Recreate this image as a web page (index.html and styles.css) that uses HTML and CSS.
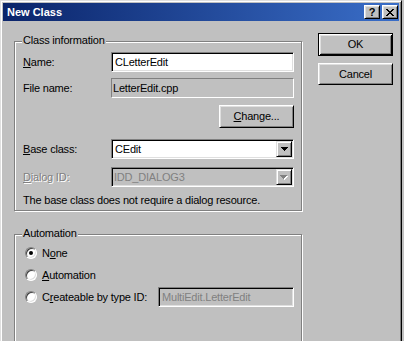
FILE: index.html
```html
<!DOCTYPE html>
<html>
<head>
<meta charset="utf-8">
<title>New Class</title>
<link rel="stylesheet" href="styles.css">
</head>
<body>
<div class="window">
  <div class="titlebar">
    <span class="title">New Class</span>
    <div class="tbtns">
      <span class="tbtn help">?</span>
      <span class="tbtn close">
        <svg width="8" height="7" viewBox="0 0 8 7" shape-rendering="crispEdges"><path d="M0 0h2v1h1v1h2v-1h1v-1h2v1h-1v1h-1v1h-1v1h1v1h1v1h1v1h-2v-1h-1v-1h-2v1h-1v1h-2v-1h1v-1h1v-1h1v-1h-1v-1h-1v-1h-1z" fill="#000"/></svg>
      </span>
    </div>
  </div>
  <div class="client">
    <div class="left">
      <div class="group g1">
        <span class="legend">Class information</span>
        <div class="row r-name">
          <span class="lbl"><u>N</u>ame:</span>
          <div class="edit">CLetterEdit</div>
        </div>
        <div class="row r-file">
          <span class="lbl">File name:</span>
          <div class="static">LetterEdit.cpp</div>
        </div>
        <div class="row r-change">
          <span class="btn change"><span><u>C</u>hange...</span></span>
        </div>
        <div class="row r-base">
          <span class="lbl"><u>B</u>ase class:</span>
          <div class="combo">
            <span class="val">CEdit</span>
            <span class="drop">
              <svg width="7" height="4" viewBox="0 0 7 4" shape-rendering="crispEdges"><path d="M0 0h7v1h-1v1h-1v1h-1v1h-1v-1h-1v-1h-1v-1h-1z" fill="#000"/></svg>
            </span>
          </div>
        </div>
        <div class="row r-dlg">
          <span class="lbl disabled"><u>D</u>ialog ID:</span>
          <div class="combo dis">
            <span class="val">IDD_DIALOG3</span>
            <span class="drop">
              <svg width="8" height="5" viewBox="0 0 8 5" shape-rendering="crispEdges"><path d="M1 1h7v1h-1v1h-1v1h-1v1h-1v-1h-1v-1h-1v-1h-1z" fill="#fff"/><path d="M0 0h7v1h-1v1h-1v1h-1v1h-1v-1h-1v-1h-1v-1h-1z" fill="#808080"/></svg>
            </span>
          </div>
        </div>
        <p class="note">The base class does not require a dialog resource.</p>
      </div>
      <div class="group g2">
        <span class="legend">Automation</span>
        <div class="opt o1">
          <span class="radio checked"></span>
          <span class="otext">N<u>o</u>ne</span>
        </div>
        <div class="opt o2">
          <span class="radio"></span>
          <span class="otext"><u>A</u>utomation</span>
        </div>
        <div class="opt o3">
          <span class="radio"></span>
          <span class="otext">C<u>r</u>eateable by type ID:</span>
          <div class="edit dedit">MultiEdit.LetterEdit</div>
        </div>
      </div>
    </div>
    <div class="right">
      <span class="btn ok"><span>OK</span></span>
      <span class="btn cancel"><span>Cancel</span></span>
    </div>
  </div>
</div>
</body>
</html>
```

FILE: styles.css
```css
* { box-sizing: border-box; }
html, body {
  margin: 0;
  height: 100%;
  overflow: hidden;
  background: #c0c0c0;
}
body {
  font-family: "Liberation Sans", Arial, sans-serif;
  font-size: 11px;
  letter-spacing: -0.2px;
  color: #000;
}
u { text-decoration: underline; text-underline-offset: 1px; }

.window {
  width: 402px;
  height: 341px;
  overflow: hidden;
  border: 1px solid;
  border-bottom-width: 0;
  border-color: #dfdfdf #000 #000 #dfdfdf;
  box-shadow: inset 1px 1px #fff, inset -1px 0 #808080;
  padding: 2px 2px 0;
  background: #c0c0c0;
}

.titlebar {
  height: 18px;
  display: flex;
  align-items: center;
  justify-content: space-between;
  padding: 0 1px 0 4px;
  background: linear-gradient(to right, #0a246a, #3a6ec8);
}
.title {
  color: #fff;
  font-weight: bold;
  font-size: 11px;
  letter-spacing: 0;
  line-height: 13px;
}
.tbtns {
  display: flex;
  gap: 2px;
}
.tbtn {
  width: 16px;
  height: 14px;
  display: flex;
  align-items: center;
  justify-content: center;
  background: #c0c0c0;
  border: 1px solid;
  border-color: #fff #000 #000 #fff;
  box-shadow: inset 1px 1px #dfdfdf, inset -1px -1px #808080;
  font-weight: bold;
  font-size: 11px;
  letter-spacing: 0;
  line-height: 10px;
}

.client {
  display: flex;
  align-items: flex-start;
  padding-left: 11px;
}
.left {
  width: 289px;
  padding-top: 20px;
}
.right {
  margin-left: 15px;
  padding-top: 12px;
  display: flex;
  flex-direction: column;
  gap: 7px;
}

.group {
  position: relative;
  width: 288px;
  border: 1px solid #808080;
  box-shadow: 1px 1px 0 #fff, inset 1px 1px 0 #fff;
  padding: 10px 7px 0 8px;
}
.legend {
  position: absolute;
  top: -8px;
  left: 7px;
  padding: 0 1px;
  line-height: 13px;
  background: #c0c0c0;
}
.g1 { height: 170px; }
.g2 {
  height: 130px;
  margin-top: 23px;
  padding-left: 10px;
}

.row {
  display: grid;
  grid-template-columns: 88px 183px;
  align-items: center;
  height: 20px;
}
.r-file { margin-top: 6px; }
.r-change {
  margin-top: 7px;
  height: 23px;
  display: flex;
  justify-content: flex-end;
}
.r-base { margin-top: 11px; }
.r-dlg { margin-top: 8px; }
.lbl { line-height: 13px; }
.disabled {
  color: #808080;
  text-shadow: 1px 1px 0 #fff;
}
.note {
  margin: 7px 0 0;
  line-height: 13px;
}

.edit {
  height: 20px;
  border: 1px solid;
  border-color: #808080 #fff #fff #808080;
  box-shadow: inset 1px 1px #000, inset -1px -1px #dfdfdf;
  background: #fff;
  padding: 0 3px;
  line-height: 18px;
  white-space: nowrap;
}
.static {
  height: 20px;
  border: 1px solid;
  border-color: #808080 #fff #fff #808080;
  padding: 0 1px;
  line-height: 18px;
}

.combo {
  height: 20px;
  display: flex;
  border: 1px solid;
  border-color: #808080 #fff #fff #808080;
  box-shadow: inset 1px 1px #000, inset -1px -1px #dfdfdf;
  background: #fff;
  padding: 1px;
}
.combo .val {
  flex: 1;
  padding-left: 2px;
  line-height: 16px;
}
.combo.dis { background: #c0c0c0; }
.combo.dis .val { color: #808080; padding-left: 1px; }
.drop {
  width: 16px;
  height: 16px;
  display: flex;
  align-items: center;
  justify-content: center;
  background: #c0c0c0;
  border: 1px solid;
  border-color: #dfdfdf #000 #000 #dfdfdf;
  box-shadow: inset 1px 1px #fff, inset -1px -1px #808080;
}
.drop svg { display: block; }

.btn {
  width: 75px;
  height: 23px;
  display: flex;
  align-items: center;
  justify-content: center;
  background: #c0c0c0;
  border: 1px solid;
  border-color: #fff #000 #000 #fff;
  box-shadow: inset 1px 1px #dfdfdf, inset -1px -1px #808080;
  line-height: 13px;
}
.btn.ok {
  border-color: #000;
  box-shadow: inset 1px 1px #fff, inset -1px -1px #000, inset 2px 2px #dfdfdf, inset -2px -2px #808080;
}
.btn.cancel { height: 22px; }

.opt {
  display: flex;
  align-items: center;
  height: 16px;
}
.o1 { margin-top: 0; }
.o2 { margin-top: 6px; }
.o3 { margin-top: 4px; height: 20px; }
.radio {
  width: 12px;
  height: 12px;
  flex: none;
  border-radius: 50%;
  border: 1px solid;
  border-color: #808080 #fff #fff #808080;
  box-shadow: inset 1px 1px #404040, inset -1px -1px #dfdfdf;
  background: #fff;
  display: flex;
  align-items: center;
  justify-content: center;
}
.radio.checked::after {
  content: "";
  width: 4px;
  height: 4px;
  border-radius: 50%;
  background: #000;
}
.otext {
  margin-left: 5px;
  line-height: 13px;
}
.dedit {
  margin-left: auto;
  width: 136px;
  background: #c0c0c0;
  color: #808080;
}
```
